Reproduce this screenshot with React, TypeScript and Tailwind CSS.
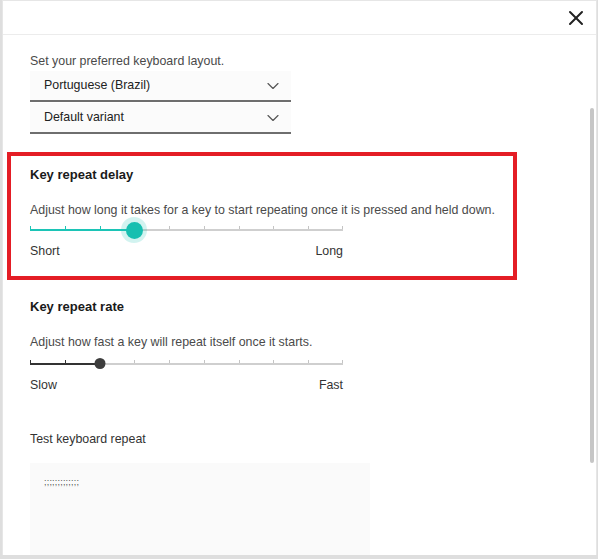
import {ChevronDown, X} from "lucide-react";

interface SliderProps {
    index: number;
    steps: number;
    variant: "teal" | "dark";
}

function Slider({index, steps, variant}: SliderProps) {
    const width = 313;
    const gap = width / (steps - 1);
    const pos = index * gap;
    const isTeal = variant === "teal";

    return (
        <div className="relative h-[20px] w-[313px]">
            <div className="absolute left-0 right-0 top-[9px] h-[2px] bg-[#cfcfcf]"/>
            <div
                className={isTeal ? "absolute left-0 top-[9px] h-[2px] bg-[#1cc4b6]" : "absolute left-0 top-[9px] h-[2px] bg-[#333]"}
                style={{width: pos}}
            />
            {Array.from({length: steps}).map((_, i) => (
                <div
                    key={i}
                    className={
                        i <= index
                            ? isTeal
                                ? "absolute top-[6px] h-[3px] w-px bg-[#1cc4b6]"
                                : "absolute top-[6px] h-[3px] w-px bg-[#333]"
                            : "absolute top-[6px] h-[3px] w-px bg-[#c4c4c4]"
                    }
                    style={{left: Math.min(i * gap, width - 1)}}
                />
            ))}
            {isTeal ? (
                <div
                    className="absolute top-[-3px] flex h-[26px] w-[26px] -translate-x-1/2 items-center justify-center rounded-full bg-[#1cc4b6]/20"
                    style={{left: pos}}
                >
                    <div className="h-[17px] w-[17px] rounded-full bg-[#17bfb0]"/>
                </div>
            ) : (
                <div
                    className="absolute top-[4px] h-[11px] w-[11px] -translate-x-1/2 rounded-full bg-[#3d3d3d]"
                    style={{left: pos}}
                />
            )}
        </div>
    );
}

function Dropdown({label}: { label: string }) {
    return (
        <div
            className="flex h-[31px] w-[261px] items-center justify-between border-b-2 border-[#6e6e6e] bg-[#fbfbfb] pl-[14px] pr-2">
            <span className="text-[12.4px] text-[#222]">{label}</span>
            <ChevronDown size={20} strokeWidth={1.4} className="text-[#555]"/>
        </div>
    );
}

export default function App() {
    return (
        <div className="h-[559px] w-[598px] overflow-hidden bg-[#dedede] font-['Liberation_Sans',Arial,sans-serif]">
            <div className="ml-[2px] flex h-[555px] w-[595px] flex-col border border-b-0 border-[#e6e6e6] bg-white">
                <div className="flex h-[34px] shrink-0 items-center justify-end border-b border-[#ececec] pr-[8px]">
                    <X size={24} strokeWidth={2} className="text-[#222]"/>
                </div>

                <div className="flex min-h-0 flex-1">
                    <div className="min-w-0 flex-1 overflow-hidden pl-[27px] pt-[16px]">
                        <p className="h-[20px] text-[12.4px] leading-[20px] text-[#4a4a4a]">
                            Set your preferred keyboard layout.
                        </p>
                        <Dropdown label="Portuguese (Brazil)"/>
                        <div className="mt-px">
                            <Dropdown label="Default variant"/>
                        </div>

                        <div className="ml-[-23px] mt-[18px] w-[510px] border-4 border-[#e41d25] pb-[15px] pl-[19px] pt-[9px]">
                            <h3 className="h-[20px] text-[13px] font-semibold leading-[20px] text-[#1a1a1a]">
                                Key repeat delay
                            </h3>
                            <p className="mt-[15px] h-[20px] whitespace-nowrap text-[12.4px] leading-[20px] text-[#4a4a4a]">
                                Adjust how long it takes for a key to start repeating once it is pressed and held down.
                            </p>
                            <Slider index={3} steps={10} variant="teal"/>
                            <div className="mt-px flex h-[20px] w-[313px] justify-between text-[12.4px] leading-[20px] text-[#333]">
                                <span>Short</span>
                                <span>Long</span>
                            </div>
                        </div>

                        <h3 className="mt-[17px] h-[20px] text-[13px] font-semibold leading-[20px] text-[#1a1a1a]">
                            Key repeat rate
                        </h3>
                        <p className="mt-[15px] h-[20px] text-[12.4px] leading-[20px] text-[#4a4a4a]">
                            Adjust how fast a key will repeat itself once it starts.
                        </p>
                        <div className="mt-[2px]">
                            <Slider index={2} steps={10} variant="dark"/>
                        </div>
                        <div className="mt-px flex h-[20px] w-[313px] justify-between text-[12.4px] leading-[20px] text-[#333]">
                            <span>Slow</span>
                            <span>Fast</span>
                        </div>

                        <p className="mt-[34px] h-[20px] text-[12.4px] leading-[20px] text-[#333]">
                            Test keyboard repeat
                        </p>
                        <div className="mt-[14px] h-[120px] w-[340px] bg-[#fafafa] px-[14px] pt-[15px]">
                            <span className="block text-[9px] leading-none tracking-[0.2px] text-[#555]">
                                ;;;;;;;;;;;;;
                            </span>
                        </div>
                    </div>

                    <div className="w-[9px] shrink-0 pt-[73px]">
                        <div className="ml-[3px] h-[355px] w-[4px] rounded-full bg-[#c6c6c6]"/>
                    </div>
                </div>
            </div>
        </div>
    );
}
